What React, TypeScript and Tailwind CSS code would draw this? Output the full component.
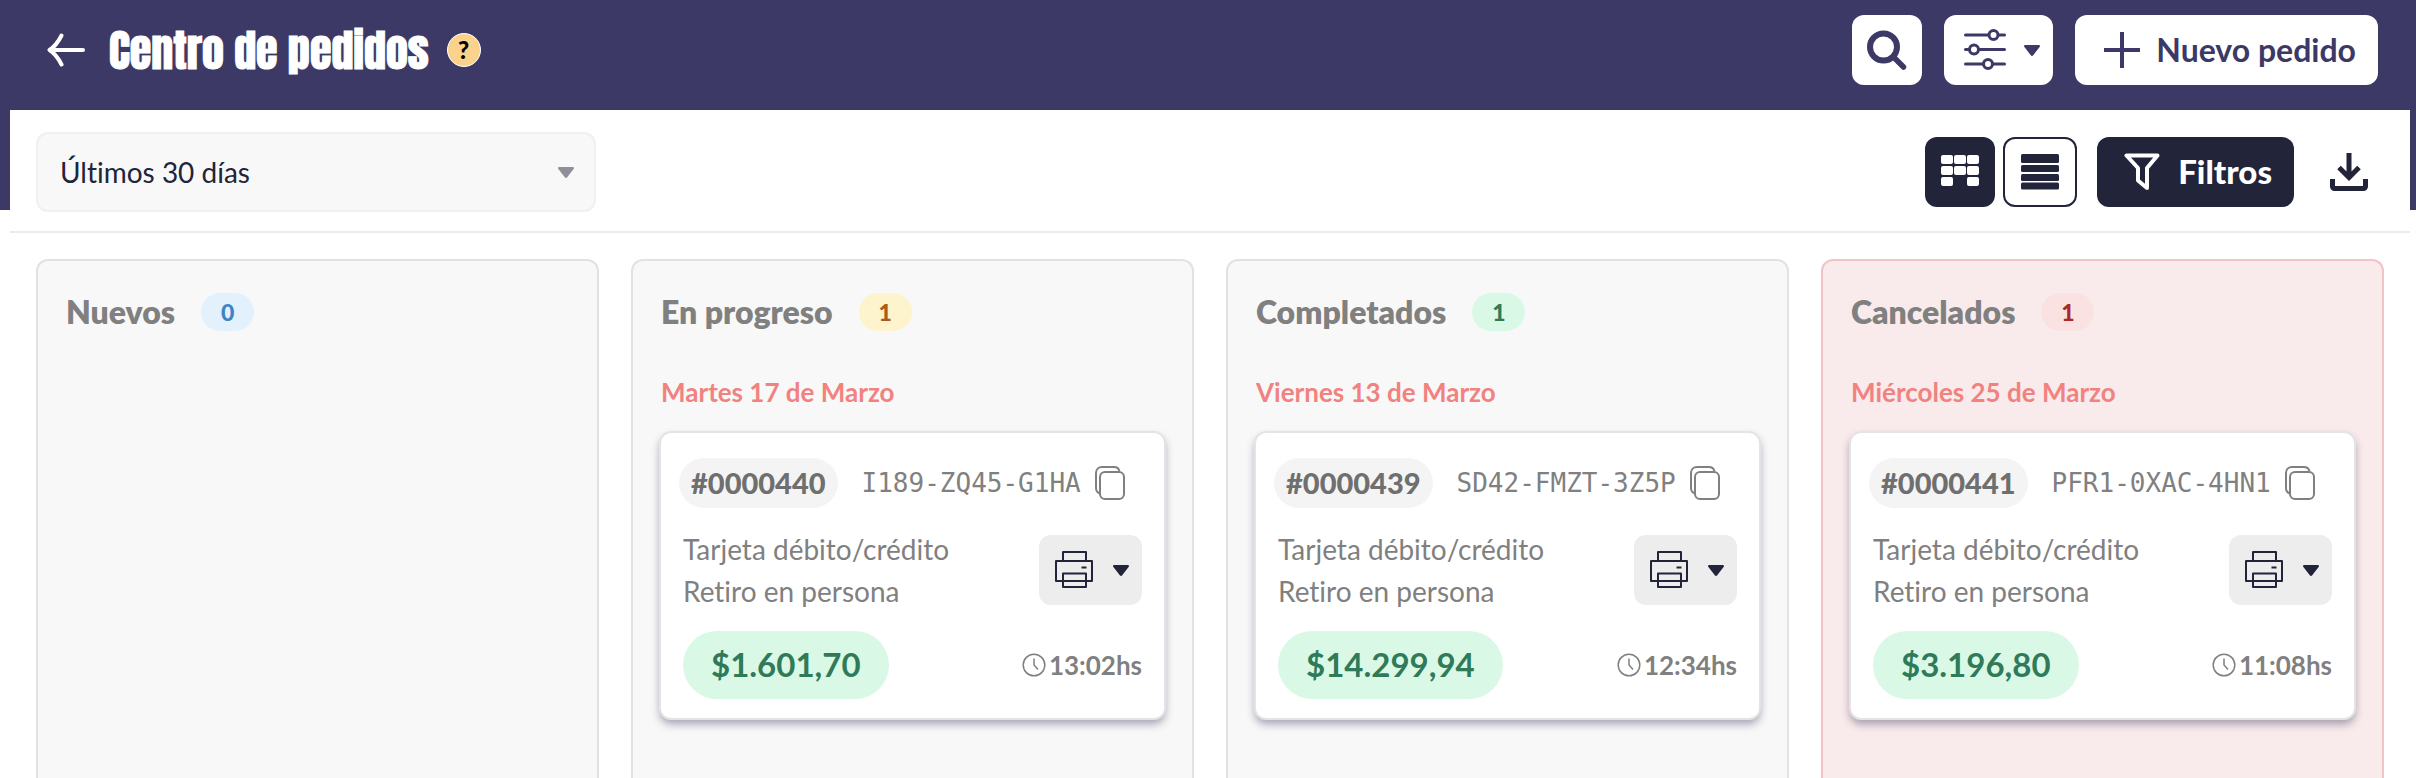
import type { ReactNode } from 'react';

type Order = {
  id: string;
  code: string;
  payment: string;
  delivery: string;
  total: string;
  time: string;
};

type Column = {
  title: string;
  count: number;
  panel: string;
  badge: string;
  date?: string;
  orders: Order[];
};

const columns: Column[] = [
  {
    title: 'Nuevos',
    count: 0,
    panel: 'border-[#e2e2e2] bg-[#f8f8f8]',
    badge: 'bg-[#e3f1fd] text-[#3d84c6]',
    orders: [],
  },
  {
    title: 'En progreso',
    count: 1,
    panel: 'border-[#e2e2e2] bg-[#f8f8f8]',
    badge: 'bg-[#fdf3cd] text-[#ac5a20]',
    date: 'Martes 17 de Marzo',
    orders: [
      { id: '#0000440', code: 'I189-ZQ45-G1HA', payment: 'Tarjeta débito/crédito', delivery: 'Retiro en persona', total: '$1.601,70', time: '13:02hs' },
    ],
  },
  {
    title: 'Completados',
    count: 1,
    panel: 'border-[#e2e2e2] bg-[#f8f8f8]',
    badge: 'bg-[#d9f8e5] text-[#2f7a58]',
    date: 'Viernes 13 de Marzo',
    orders: [
      { id: '#0000439', code: 'SD42-FMZT-3Z5P', payment: 'Tarjeta débito/crédito', delivery: 'Retiro en persona', total: '$14.299,94', time: '12:34hs' },
    ],
  },
  {
    title: 'Cancelados',
    count: 1,
    panel: 'border-[#f1c3c7] bg-[#f9ebeb]',
    badge: 'bg-[#fbe2e2] text-[#a92a26]',
    date: 'Miércoles 25 de Marzo',
    orders: [
      { id: '#0000441', code: 'PFR1-0XAC-4HN1', payment: 'Tarjeta débito/crédito', delivery: 'Retiro en persona', total: '$3.196,80', time: '11:08hs' },
    ],
  },
];

function Caret({ className = '' }: { className?: string }) {
  return (
    <svg width="16" height="11" viewBox="0 0 16 11" fill="currentColor" className={className} aria-hidden="true">
      <path d="M1.4 0h13.2c1.2 0 1.8 1.2 1 2.1L9.2 10.3c-.6.8-1.8.8-2.4 0L.4 2.1C-.4 1.200 .2 0 1.400 0z" />
    </svg>
  );
}

function BackIcon() {
  return (
    <svg width="38" height="34" viewBox="0 0 38 34" fill="none" stroke="currentColor" strokeWidth="4" strokeLinecap="round" strokeLinejoin="round" aria-hidden="true">
      <path d="M36 17H3M14.500 2.500C11.500 8.500 8 13.500 2.500 17C8 20.500 11.500 25.500 14.500 31.500" />
    </svg>
  );
}

function SearchIcon() {
  return (
    <svg width="40" height="40" viewBox="0 0 40 40" fill="none" stroke="currentColor" strokeLinecap="round" aria-hidden="true">
      <circle cx="16.500" cy="17" r="13.500" strokeWidth="6" />
      <path d="M26.500 27L36.500 37" strokeWidth="5.500" />
    </svg>
  );
}

function SlidersIcon() {
  return (
    <svg width="42" height="42" viewBox="0 0 42 42" fill="#fff" stroke="currentColor" strokeWidth="3" strokeLinecap="round" aria-hidden="true">
      <path d="M1.500 6h39M1.500 20.500h39M1.500 35h39" />
      <circle cx="29.500" cy="6" r="4.500" />
      <circle cx="10" cy="20.500" r="4.500" />
      <circle cx="24" cy="35" r="4.500" />
    </svg>
  );
}

function PlusIcon() {
  return (
    <svg width="36" height="36" viewBox="0 0 36 36" stroke="currentColor" strokeWidth="4" aria-hidden="true">
      <path d="M18 0v36M0 18h36" />
    </svg>
  );
}

function BoardIcon() {
  const cells = [[0, 0], [13, 0], [26, 0], [0, 11], [13, 11], [26, 11], [0, 22], [26, 22]];
  return (
    <svg width="38" height="38" viewBox="0 0 38 38" fill="currentColor" aria-hidden="true">
      {cells.map(([x, y]) => (
        <rect key={`${x}-${y}`} x={x} y={y + 2} width="12" height="9" rx="2" />
      ))}
    </svg>
  );
}

function ListIcon() {
  return (
    <svg width="38" height="36" viewBox="0 0 38 36" fill="currentColor" aria-hidden="true">
      <rect width="38" height="9" rx="1.500" />
      <rect y="11" width="38" height="7" rx="1.500" />
      <rect y="20" width="38" height="7" rx="1.500" />
      <rect y="28.500" width="38" height="7" rx="1.500" />
    </svg>
  );
}

function FunnelIcon() {
  return (
    <svg width="36" height="38" viewBox="0 0 36 38" fill="none" stroke="currentColor" strokeWidth="4" strokeLinejoin="round" aria-hidden="true">
      <path d="M2.500 2.500h31l-10.500 12.500v20l-9-7.500V15z" />
    </svg>
  );
}

function DownloadIcon() {
  return (
    <svg width="38" height="40" viewBox="0 0 38 40" fill="none" stroke="currentColor" strokeWidth="5" aria-hidden="true">
      <path d="M19 1v24M9 15.500l10 10 10-10" />
      <path d="M2.500 27v7.500a2 2 0 0 0 2 2h29a2 2 0 0 0 2-2V27" />
    </svg>
  );
}

function CopyIcon() {
  return (
    <svg width="30" height="34" viewBox="0 0 30 34" fill="none" stroke="currentColor" strokeWidth="2" aria-hidden="true">
      <rect x="5" y="6" width="24" height="27" rx="5" />
      <path d="M5.500 27.500C3 27 1 25 1 22V7c0-3.500 2.500-6 6-6h12c3 0 5 2 5.500 4.500" />
    </svg>
  );
}

function PrinterIcon() {
  return (
    <svg width="38" height="38" viewBox="0 0 38 38" fill="none" stroke="currentColor" strokeWidth="2" strokeLinejoin="round" aria-hidden="true">
      <path d="M8 10V1h23v9" />
      <path d="M8 30H1V10h36v20h-6" />
      <path d="M8 22.500h23V36H8zM8 30h23M26.500 16.500h5" />
    </svg>
  );
}

function ClockIcon() {
  return (
    <svg width="24" height="24" viewBox="0 0 24 24" fill="none" stroke="currentColor" strokeWidth="1.500" aria-hidden="true">
      <circle cx="12" cy="12" r="10.800" />
      <path d="M12 5.500v6.500l4 4.500" />
    </svg>
  );
}

function HeaderButton({ label, className, children }: { label?: string; className: string; children: ReactNode }) {
  return (
    <button type="button" aria-label={label} className={`flex h-[70px] items-center rounded-xl bg-white text-[#3c3966] ${className}`}>
      {children}
    </button>
  );
}

function OrderCard({ order }: { order: Order }) {
  return (
    <article className="rounded-xl border-2 border-[#e4e4e6] bg-white px-[22px] pt-[25px] pb-[19px] shadow-[0_5px_8px_-1px_rgba(34,36,80,0.4)]">
      <div className="-ml-1 flex h-[50px] items-center">
        <span className="flex h-full items-center rounded-full bg-[#f4f4f4] px-3 text-[29px] font-black text-[#6f6f6f]">{order.id}</span>
        <span className="ml-6 font-['DejaVu_Sans_Mono',monospace] text-[26px] whitespace-nowrap">{order.code}</span>
        <button type="button" aria-label="Copiar código" className="ml-[14px]">
          <CopyIcon />
        </button>
      </div>

      <div className="mt-5 flex items-center justify-between">
        <div className="text-[28px] leading-[42px]">
          <p>{order.payment}</p>
          <p>{order.delivery}</p>
        </div>
        <button type="button" aria-label="Imprimir" className="flex h-[70px] items-center gap-5 rounded-xl bg-[#ededed] pr-[13px] pl-4 text-[#22243a]">
          <PrinterIcon />
          <Caret />
        </button>
      </div>

      <div className="mt-[19px] flex items-center justify-between">
        <span className="flex h-[68px] items-center rounded-full bg-[#d9f8e5] px-7 text-[33px] font-bold text-[#2f7a58]">{order.total}</span>
        <span className="flex items-center gap-[3px] text-[26px] font-bold">
          <ClockIcon />
          {order.time}
        </span>
      </div>
    </article>
  );
}

export default function App() {
  return (
    <div className="flex min-h-screen flex-col bg-[linear-gradient(#3c3966_210px,#fff_210px)] pr-[6px] pl-[10px] font-['Lato',sans-serif] text-[#808080] [font-variant-ligatures:none]">
      <header className="flex h-[110px] items-start justify-between pt-[15px] pr-8 pl-[37px]">
        <div className="flex h-[70px] items-center text-white">
          <button type="button" aria-label="Volver">
            <BackIcon />
          </button>
          <h1 className="ml-6 font-['Anton',sans-serif] text-[44px] leading-[70px] font-normal [-webkit-text-stroke:1px_#fff]">Centro de pedidos</h1>
          <button type="button" aria-label="Ayuda" className="ml-[18px] flex size-[34px] items-center justify-center rounded-full border border-white bg-[#fad28c] text-2xl leading-none font-black text-black">
            ?
          </button>
        </div>
        <div className="flex gap-[22px]">
          <HeaderButton label="Buscar" className="w-[70px] justify-center">
            <SearchIcon />
          </HeaderButton>
          <HeaderButton label="Opciones" className="w-[109px] justify-between pr-[13px] pl-5">
            <SlidersIcon />
            <Caret />
          </HeaderButton>
          <HeaderButton className="gap-4 pr-[22px] pl-[29px] text-[32px] font-bold">
            <PlusIcon />
            Nuevo pedido
          </HeaderButton>
        </div>
      </header>

      <main className="flex flex-1 flex-col bg-white">
        <div className="flex h-[123px] items-start justify-between border-b-2 border-[#ebebeb] px-[26px] pt-[22px]">
          <div className="grid w-[560px] items-center">
            <select aria-label="Período" defaultValue="30" className="col-start-1 row-start-1 h-20 appearance-none rounded-xl border-2 border-[#f0f0f0] bg-[#f8f8f8] px-[22px] text-[28px] text-[#22243a]">
              <option value="30">Últimos 30 días</option>
            </select>
            <Caret className="pointer-events-none col-start-1 row-start-1 mr-[22px] justify-self-end text-[#8e8f9b]" />
          </div>
          <div className="flex items-center pt-[5px] text-[#22243a]">
            <button type="button" aria-label="Vista de tablero" className="flex size-[70px] items-center justify-center rounded-xl bg-[#22243a] text-white">
              <BoardIcon />
            </button>
            <button type="button" aria-label="Vista de lista" className="ml-2 flex h-[70px] w-[74px] items-center justify-center rounded-xl border-2 border-[#22243a] bg-white">
              <ListIcon />
            </button>
            <button type="button" className="ml-5 flex h-[70px] items-center gap-[18px] rounded-xl bg-[#22243a] pr-[22px] pl-[27px] text-[33px] font-black text-white">
              <FunnelIcon />
              Filtros
            </button>
            <button type="button" aria-label="Descargar" className="mr-4 ml-9">
              <DownloadIcon />
            </button>
          </div>
        </div>

        <div className="grid flex-1 grid-cols-4 gap-8 px-[26px] pt-[26px]">
          {columns.map((column) => (
            <section key={column.title} className={`rounded-t-xl border-2 border-b-0 px-[26px] pt-[27px] pb-14 ${column.panel}`}>
              <div className="flex h-12 items-center gap-[26px] px-[2px]">
                <h2 className="text-[32px] font-extrabold">{column.title}</h2>
                <span className={`flex h-[38px] w-[53px] items-center justify-center rounded-full text-[23px] font-black ${column.badge}`}>{column.count}</span>
              </div>
              {column.date && <h3 className="mt-[38px] mb-[21px] px-[2px] text-[26px] leading-9 font-bold text-[#f1827f]">{column.date}</h3>}
              {column.orders.map((order) => (
                <OrderCard key={order.id} order={order} />
              ))}
            </section>
          ))}
        </div>
      </main>
    </div>
  );
}
